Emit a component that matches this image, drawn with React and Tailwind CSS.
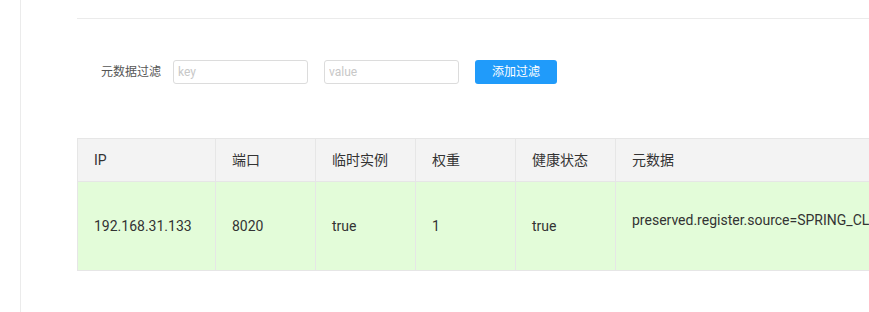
import React from 'react';

const columns = [
  { key: 'ip', title: 'IP', width: 'w-[138px]' },
  { key: 'port', title: '端口', width: 'w-[100px]' },
  { key: 'ephemeral', title: '临时实例', width: 'w-[100px]' },
  { key: 'weight', title: '权重', width: 'w-[100px]' },
  { key: 'healthy', title: '健康状态', width: 'w-[100px]' },
  { key: 'metadata', title: '元数据', width: 'w-[420px]' },
];

const rows = [
  {
    ip: '192.168.31.133',
    port: '8020',
    ephemeral: 'true',
    weight: '1',
    healthy: 'true',
    metadata: 'preserved.register.source=SPRING_CLOUD',
  },
];

const App = () => {
  return (
    <div
      className="flex w-[869px] h-[312px] overflow-hidden bg-white text-[#333]"
      style={{ fontFamily: 'Roboto, "Noto Sans CJK SC", sans-serif' }}
    >
      {/* left sidebar edge */}
      <div className="w-[21px] shrink-0 border-r border-[#ebebeb]" />

      <div className="flex-1 min-w-0 pl-[56px]">
        <div className="h-[19px] border-b border-[#ebebeb]" />

        {/* metadata filter */}
        <div className="flex items-center h-[24px] mt-[41px] pl-[24px] text-[12px]">
          <span className="text-[#555] mr-[12px]">元数据过滤</span>
          <input
            type="text"
            placeholder="key"
            className="w-[135px] h-[24px] px-[4px] border border-[#dcdcdc] rounded-[3px] text-[12px] placeholder-[#c8c8c8] focus:outline-none"
          />
          <input
            type="text"
            placeholder="value"
            className="w-[135px] h-[24px] ml-[16px] px-[4px] border border-[#dcdcdc] rounded-[3px] text-[12px] placeholder-[#c8c8c8] focus:outline-none"
          />
          <button className="w-[82px] h-[24px] ml-[16px] rounded-[3px] bg-[#209bfa] text-white text-[12px]">
            添加过滤
          </button>
        </div>

        {/* instance table */}
        <table className="w-[958px] max-w-none mt-[54px] border-collapse text-[14px] table-fixed">
          <thead>
            <tr className="bg-[#f3f3f3]">
              {columns.map((col) => (
                <th
                  key={col.key}
                  className={`${col.width} h-[43px] px-[16px] border border-[#e6e6e6] text-left font-normal text-[#333] whitespace-nowrap`}
                >
                  {col.title}
                </th>
              ))}
            </tr>
          </thead>
          <tbody>
            {rows.map((row, i) => (
              <tr key={i} className="bg-[#e3fcd9]">
                {columns.map((col) => (
                  <td
                    key={col.key}
                    className="h-[89px] px-[16px] border border-[#e6e6e6] whitespace-nowrap"
                  >
                    {col.key === 'metadata' ? (
                      <div className="pb-[12px]">{row[col.key]}</div>
                    ) : (
                      row[col.key]
                    )}
                  </td>
                ))}
              </tr>
            ))}
          </tbody>
        </table>
      </div>
    </div>
  );
};

export default App;
